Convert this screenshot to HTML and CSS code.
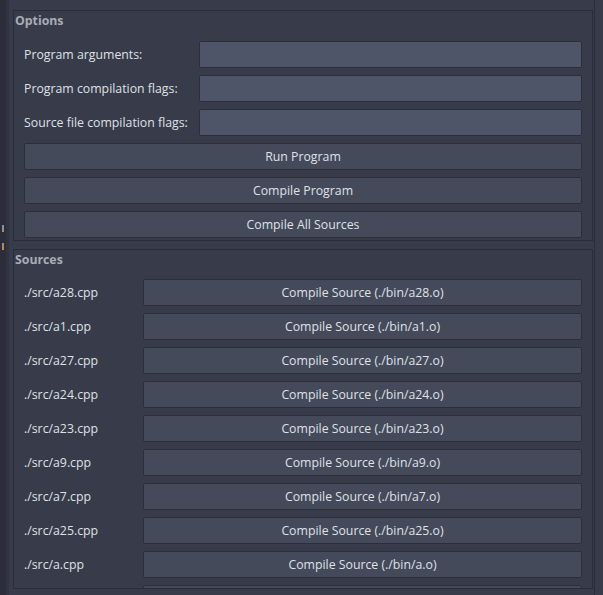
FILE: index.html
```html
<!DOCTYPE html>
<html>
<head>
<meta charset="utf-8">
<link rel="stylesheet" href="styles.css">
</head>
<body>
<div class="app">
  <div class="strip">
    <span class="mark mark-a"></span>
    <span class="mark mark-b"></span>
  </div>
  <div class="main">
    <section class="panel options">
      <div class="header">Options</div>
      <div class="form">
        <label class="label">Program arguments:</label><div class="input"></div>
        <label class="label">Program compilation flags:</label><div class="input"></div>
        <label class="label">Source file compilation flags:</label><div class="input"></div>
      </div>
      <div class="buttons">
        <div class="btn">Run Program</div>
        <div class="btn">Compile Program</div>
        <div class="btn">Compile All Sources</div>
      </div>
    </section>
    <section class="panel sources">
      <div class="header">Sources</div>
      <div class="list">
        <span class="label">./src/a28.cpp</span><div class="btn">Compile Source (./bin/a28.o)</div>
        <span class="label">./src/a1.cpp</span><div class="btn">Compile Source (./bin/a1.o)</div>
        <span class="label">./src/a27.cpp</span><div class="btn">Compile Source (./bin/a27.o)</div>
        <span class="label">./src/a24.cpp</span><div class="btn">Compile Source (./bin/a24.o)</div>
        <span class="label">./src/a23.cpp</span><div class="btn">Compile Source (./bin/a23.o)</div>
        <span class="label">./src/a9.cpp</span><div class="btn">Compile Source (./bin/a9.o)</div>
        <span class="label">./src/a7.cpp</span><div class="btn">Compile Source (./bin/a7.o)</div>
        <span class="label">./src/a25.cpp</span><div class="btn">Compile Source (./bin/a25.o)</div>
        <span class="label">./src/a.cpp</span><div class="btn">Compile Source (./bin/a.o)</div>
        <span class="label"></span><div class="btn"></div>
      </div>
    </section>
  </div>
</div>
</body>
</html>
```
FILE: styles.css
```css
html, body {
  margin: 0;
  padding: 0;
  height: 100%;
  overflow: hidden;
}
body {
  background: #383b4a;
  font-family: "Open Sans", "Noto Sans", sans-serif;
  font-size: 12.3px;
  color: #dfe1e6;
}
.app {
  display: flex;
  height: 595px;
}
.strip {
  width: 6px;
  flex: none;
  background: #2b2e3a;
  border-right: 3px solid #31343f;
  display: flex;
  flex-direction: column;
}
.mark {
  display: block;
  width: 2px;
  margin-left: 2px;
}
.mark-a {
  margin-top: 225px;
  height: 7px;
  background: linear-gradient(#5f9cc0, #c08a4a);
}
.mark-b {
  margin-top: 11px;
  height: 7px;
  background: #b88a52;
}
.main {
  flex: 1;
  padding: 10px 0 0 4px;
  display: flex;
  flex-direction: column;
  gap: 8px;
  border-right: 1px solid #2a2c37;
  margin-right: 8px;
  min-width: 0;
  overflow: hidden;
}
.panel {
  border: 1px solid #2a2c37;
  margin-right: 1px;
  padding: 0 10px 2px 10px;
  flex: none;
}
.header {
  margin-left: -9px;
  padding-top: 1px;
  height: 18px;
  line-height: 18px;
  font-weight: 700;
  color: #a9acb6;
}
.options .header { margin-bottom: 11px; }
.sources .header { margin-bottom: 10px; }
.sources {
  height: 340px;
  overflow: hidden;
  box-sizing: border-box;
}
.form {
  display: grid;
  grid-template-columns: 167px 1fr;
  column-gap: 8px;
  row-gap: 7px;
  align-items: center;
}
.list {
  display: grid;
  grid-template-columns: 111px 1fr;
  column-gap: 8px;
  row-gap: 7px;
  align-items: center;
}
.label {
  white-space: nowrap;
}
.input {
  height: 25px;
  background: #4f5568;
  border: 1px solid #2c2f3b;
  border-radius: 2px;
}
.buttons {
  display: flex;
  flex-direction: column;
  gap: 7px;
  margin-top: 7px;
}
.btn {
  height: 25px;
  line-height: 25px;
  text-align: center;
  background: #454a5b;
  border: 1px solid #2c2f3b;
  border-radius: 2px;
  white-space: nowrap;
}
```
